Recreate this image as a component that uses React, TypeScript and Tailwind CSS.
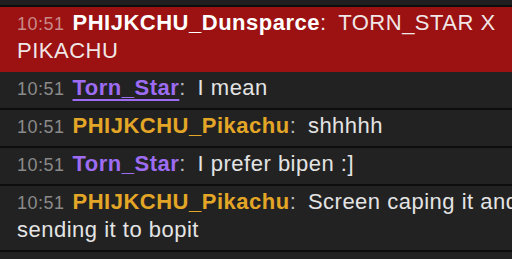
type Line = {
  name: string;
  color: string;
  text: string;
  highlight?: boolean;
  hover?: boolean;
};

const lines: Line[] = [
  { name: "PHIJKCHU_Dunsparce", color: "text-white", text: "TORN_STAR X PIKACHU", highlight: true },
  { name: "Torn_Star", color: "text-[#9d6cf2]", text: "I mean", hover: true },
  { name: "PHIJKCHU_Pikachu", color: "text-[#e3a626]", text: "shhhhh" },
  { name: "Torn_Star", color: "text-[#9d6cf2]", text: "I prefer bipen :]" },
  { name: "PHIJKCHU_Pikachu", color: "text-[#e3a626]", text: "Screen caping it and sending it to bopit" },
];

function ChatLine({ line, first }: { line: Line; first: boolean }) {
  return (
    <div
      className={`pl-[17px] pt-[2px] text-[22px] leading-[28px] tracking-[0.5px] ${
        line.highlight ? "bg-[#9c1111] pb-[7px] text-[#f0e6e6]" : "bg-[#222222] pb-[6px] text-[#e4e4e4]"
      } ${first || line.highlight ? "" : "border-t-2 border-[#0d0d0d]"}`}
    >
      <span
        className={`mr-[8px] text-[18px] leading-none ${line.highlight ? "text-[#c98a8a]" : "text-[#8a8a8a]"}`}
      >
        10:51
      </span>
      <span
        className={`font-bold ${line.color} ${
          line.hover ? "underline decoration-2 underline-offset-[4px]" : ""
        }`}
      >
        {line.name}
      </span>
      <span className={line.highlight ? "text-[#f0e6e6]" : "text-[#bdbdbd]"}>:</span>{" "}
      <span className="ml-[5px]">{line.text}</span>
    </div>
  );
}

export default function App() {
  return (
    <div className="h-[259px] w-[512px] overflow-hidden bg-[#222222] font-['Liberation_Sans',Arial,sans-serif]">
      <div className="w-[560px]">
        <div className="h-[5px] bg-[#1f1f21]" />
        <div className="h-[2px] bg-[#0d0d0d]" />
        {lines.map((l, i) => (
          <ChatLine key={i} line={l} first={i === 1} />
        ))}
        <div className="h-[10px] border-t-2 border-[#0d0d0d] bg-[#222222]" />
      </div>
    </div>
  );
}
